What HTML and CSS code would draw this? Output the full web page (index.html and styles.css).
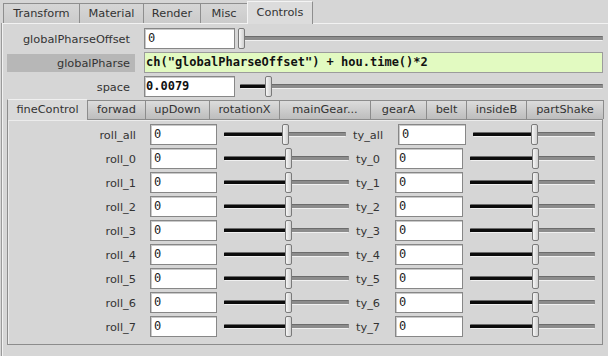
FILE: index.html
```html
<!DOCTYPE html>
<html>
<head>
<meta charset="utf-8">
<link rel="stylesheet" href="styles.css">
</head>
<body>
<div class="tabs">
  <div class="tab t-transform">Transform</div>
  <div class="tab t-material">Material</div>
  <div class="tab t-render">Render</div>
  <div class="tab t-misc">Misc</div>
  <div class="tab t-controls active">Controls</div>
</div>
<div class="panel">
  <div class="prow">
    <div class="plabel">globalPharseOffset</div>
    <div class="field wide">0</div>
    <div class="slider top">
      <div class="track"></div>
      <div class="fill" style="width:0%"></div>
      <div class="handle" style="left:0%"></div>
    </div>
  </div>
  <div class="prow">
    <div class="plabel hl">globalPharse</div>
    <div class="expr">ch("globalPharseOffset") + hou.time()*2</div>
  </div>
  <div class="prow">
    <div class="plabel">space</div>
    <div class="field wide bold">0.0079</div>
    <div class="slider top">
      <div class="track"></div>
      <div class="fill" style="width:7.5%"></div>
      <div class="handle" style="left:7.5%"></div>
    </div>
  </div>

  <div class="subtabs">
    <div class="stab s1 active">fineControl</div>
    <div class="stab s2">forwad</div>
    <div class="stab s3">upDown</div>
    <div class="stab s4">rotationX</div>
    <div class="stab s5">mainGear...</div>
    <div class="stab s6">gearA</div>
    <div class="stab s7">belt</div>
    <div class="stab s8">insideB</div>
    <div class="stab s9">partShake</div>
  </div>
  <div class="subpanel">
    <div class="row">
      <div class="label">roll_all</div><div class="field">0</div>
      <div class="slider"><div class="track"></div><div class="fill" style="width:48%"></div><div class="handle" style="left:48%"></div></div>
      <div class="label2">ty_all</div><div class="field f2">0</div>
      <div class="slider"><div class="track"></div><div class="fill" style="width:48.5%"></div><div class="handle" style="left:48.5%"></div></div>
    </div>
    <div class="row">
      <div class="label">roll_0</div><div class="field">0</div>
      <div class="slider"><div class="track"></div><div class="fill" style="width:50%"></div><div class="handle" style="left:50%"></div></div>
      <div class="label2">ty_0</div><div class="field f2">0</div>
      <div class="slider"><div class="track"></div><div class="fill" style="width:50%"></div><div class="handle" style="left:50%"></div></div>
    </div>
    <div class="row">
      <div class="label">roll_1</div><div class="field">0</div>
      <div class="slider"><div class="track"></div><div class="fill" style="width:50%"></div><div class="handle" style="left:50%"></div></div>
      <div class="label2">ty_1</div><div class="field f2">0</div>
      <div class="slider"><div class="track"></div><div class="fill" style="width:50%"></div><div class="handle" style="left:50%"></div></div>
    </div>
    <div class="row">
      <div class="label">roll_2</div><div class="field">0</div>
      <div class="slider"><div class="track"></div><div class="fill" style="width:50%"></div><div class="handle" style="left:50%"></div></div>
      <div class="label2">ty_2</div><div class="field f2">0</div>
      <div class="slider"><div class="track"></div><div class="fill" style="width:50%"></div><div class="handle" style="left:50%"></div></div>
    </div>
    <div class="row">
      <div class="label">roll_3</div><div class="field">0</div>
      <div class="slider"><div class="track"></div><div class="fill" style="width:50%"></div><div class="handle" style="left:50%"></div></div>
      <div class="label2">ty_3</div><div class="field f2">0</div>
      <div class="slider"><div class="track"></div><div class="fill" style="width:50%"></div><div class="handle" style="left:50%"></div></div>
    </div>
    <div class="row">
      <div class="label">roll_4</div><div class="field">0</div>
      <div class="slider"><div class="track"></div><div class="fill" style="width:50%"></div><div class="handle" style="left:50%"></div></div>
      <div class="label2">ty_4</div><div class="field f2">0</div>
      <div class="slider"><div class="track"></div><div class="fill" style="width:50%"></div><div class="handle" style="left:50%"></div></div>
    </div>
    <div class="row">
      <div class="label">roll_5</div><div class="field">0</div>
      <div class="slider"><div class="track"></div><div class="fill" style="width:50%"></div><div class="handle" style="left:50%"></div></div>
      <div class="label2">ty_5</div><div class="field f2">0</div>
      <div class="slider"><div class="track"></div><div class="fill" style="width:50%"></div><div class="handle" style="left:50%"></div></div>
    </div>
    <div class="row">
      <div class="label">roll_6</div><div class="field">0</div>
      <div class="slider"><div class="track"></div><div class="fill" style="width:50%"></div><div class="handle" style="left:50%"></div></div>
      <div class="label2">ty_6</div><div class="field f2">0</div>
      <div class="slider"><div class="track"></div><div class="fill" style="width:50%"></div><div class="handle" style="left:50%"></div></div>
    </div>
    <div class="row">
      <div class="label">roll_7</div><div class="field">0</div>
      <div class="slider"><div class="track"></div><div class="fill" style="width:50%"></div><div class="handle" style="left:50%"></div></div>
      <div class="label2">ty_7</div><div class="field f2">0</div>
      <div class="slider"><div class="track"></div><div class="fill" style="width:50%"></div><div class="handle" style="left:50%"></div></div>
    </div>
  </div>
</div>
</body>
</html>
```
FILE: styles.css
```css
* { box-sizing: border-box; }
html, body {
  margin: 0;
  padding: 0;
  background: #d6d6d6;
  width: 608px;
  height: 356px;
  overflow: hidden;
  font-family: "DejaVu Sans", sans-serif;
  font-size: 11.33px;
  color: #333;
}

/* top tabs */
.tabs {
  display: flex;
  align-items: flex-end;
  height: 23px;
  padding-left: 3px;
}
.tab {
  height: 20px;
  line-height: 18px;
  text-align: center;
  background: linear-gradient(#d6d6d6, #cbcbcb);
  border: 1px solid #8e8e8e;
  border-right: none;
  border-bottom: none;
  white-space: nowrap;
}
.t-transform { width: 76px; }
.t-material { width: 64px; }
.t-render { width: 57px; }
.t-misc { width: 47px; }
.t-controls { width: 66px; border-right: 1px solid #8e8e8e; }
.tab.active {
  height: 23px;
  margin-bottom: -1px;
  position: relative;
  line-height: 20px;
  background: #dcdcdc;
  border-top-color: #f4f4f4;
  border-left-color: #f4f4f4;
}

.panel {
  margin-left: 2px;
  border-top: 1px solid #f2f2f2;
  border-left: 1px solid #f2f2f2;
  box-shadow: -1px 0 0 #9a9a9a;
  padding: 4px 4px 0 4px;
  height: 333px;
}

.prow {
  display: flex;
  align-items: center;
  height: 21px;
  margin-bottom: 3px;
}
.plabel {
  width: 128px;
  flex: none;
  text-align: right;
  padding-right: 5px;
  height: 18px;
  line-height: 18px;
  margin-right: 9px;
}
.plabel.hl { background: #b7b7b7; }

.field {
  flex: none;
  width: 67px;
  height: 21px;
  background: #fff;
  border: 1px solid #878787;
  box-shadow: inset 1px 1px 0 #c9c9c9;
  font-family: "DejaVu Sans Mono", monospace;
  font-size: 12px;
  line-height: 19px;
  padding-left: 3px;
  color: #222;
}
.field.wide { width: 91px; }
.field.f2 { width: 68px; }
.field.bold { font-weight: bold; padding-left: 1px; color: #111; }

.expr {
  flex: 1;
  height: 21px;
  background: #e2fac1;
  border: 1px solid #9c9c9c;
  font-family: "DejaVu Sans Mono", monospace;
  font-size: 12px;
  font-weight: bold;
  line-height: 19px;
  padding-left: 1px;
  color: #111;
  margin-right: 1px;
}

/* sliders */
.slider {
  flex: 1 1 0;
  position: relative;
  height: 21px;
  margin-left: 5px;
}
.slider.top { margin-left: 3px; margin-right: 1px; }
.track {
  position: absolute;
  left: 2px;
  right: 0;
  top: 8px;
  height: 5px;
  background: #8c8c8c;
  border-top: 1px solid #6c6c6c;
  border-bottom: 1px solid #f0f0f0;
  border-radius: 1px;
}
.fill {
  position: absolute;
  left: 2px;
  top: 9px;
  height: 3px;
  background: #0c0c0c;
}
.handle {
  position: absolute;
  top: 0;
  width: 7px;
  height: 21px;
  background: linear-gradient(90deg, #f6f6f6, #d0d0d0);
  border: 1px solid #7a7a7a;
  border-radius: 2px;
}

/* sub tabs */
.subtabs {
  display: flex;
  align-items: flex-end;
  height: 19px;
  margin-top: 1px;
  margin-right: 1px;
}
.stab {
  flex: none;
  height: 19px;
  line-height: 17px;
  text-align: center;
  white-space: nowrap;
  border: 1px solid #8c8c8c;
  border-right: none;
  border-bottom: none;
  background: linear-gradient(#dcdcdc, #bdbdbd);
}
.stab.active {
  height: 21px;
  margin-bottom: -1px;
  position: relative;
  line-height: 19px;
  background: #d9d9d9;
  border-top-color: #f0f0f0;
  border-left-color: #8c8c8c;
}
.s1 { width: 80px; }
.s2 { width: 58px; }
.s3 { width: 64px; }
.s4 { width: 70px; }
.s5 { width: 91px; }
.s6 { width: 56px; }
.s7 { width: 40px; }
.s8 { width: 60px; }
.s9 { width: 78px; border-right: 1px solid #8c8c8c; }

.subpanel {
  border: 1px solid #8c8c8c;
  box-shadow: inset 1px 1px 0 #ececec;
  margin-right: 1px;
  padding: 4px 7px 7px 0;
  display: flex;
  flex-direction: column;
  gap: 3px;
}
.row {
  display: flex;
  align-items: center;
  height: 21px;
}
.label {
  flex: none;
  width: 128px;
  text-align: right;
  margin-right: 14px;
}
.label2 {
  flex: none;
  margin-left: 7px;
  margin-right: 15px;
}
```
